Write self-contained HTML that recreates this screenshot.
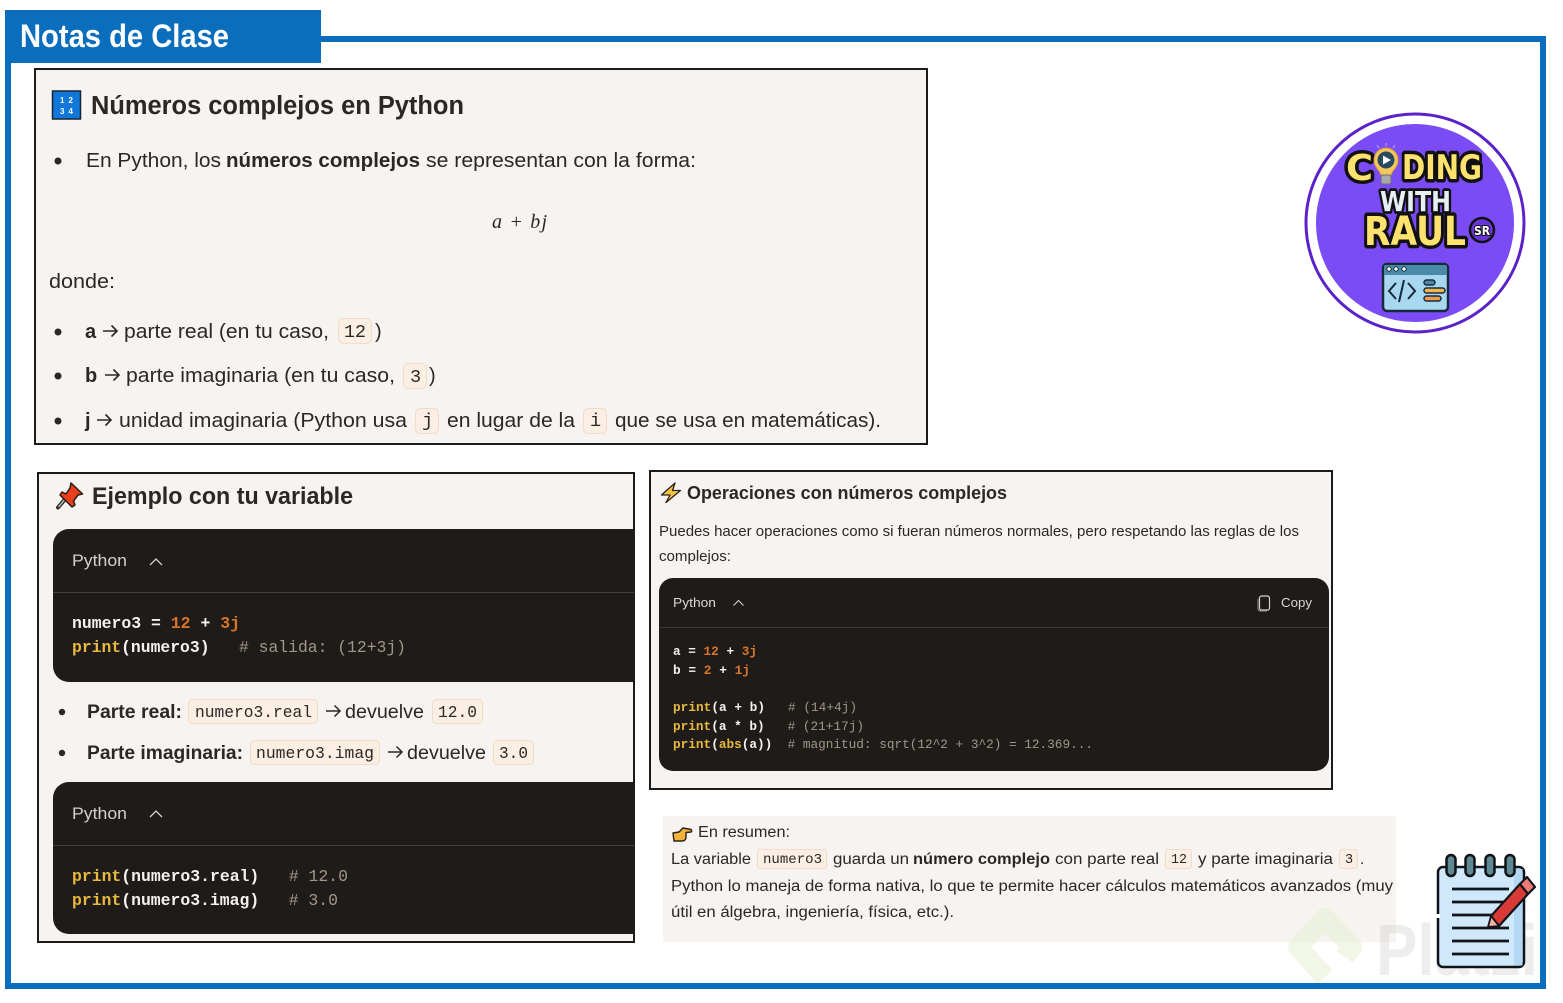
<!DOCTYPE html>
<html lang="es"><head><meta charset="utf-8"><title>Notas de Clase</title>
<style>
html,body{margin:0;padding:0;background:#fff;width:1563px;height:1003px;overflow:hidden}
svg{display:block}
text{font-family:"Liberation Sans",sans-serif;fill:#2b2724;white-space:pre}
.b{font-weight:700}
.m{font-family:"Liberation Mono",monospace}
.c{font-family:"Liberation Mono",monospace;font-weight:700;fill:#f4f1ee}
.o{fill:#d9752b}.y{fill:#e8b93f}.g{fill:#a0978a;font-weight:400}
.chip{fill:#fbefe4;stroke:#efdccb;stroke-width:1}
.lg{font-family:"DejaVu Sans",sans-serif;paint-order:stroke;font-weight:700}
</style></head><body>
<svg width="1563" height="1003" viewBox="0 0 1563 1003" xmlns="http://www.w3.org/2000/svg">
<rect width="1563" height="1003" fill="#fff"/>

<!-- box 1 -->
<rect x="35" y="69" width="892" height="375" fill="#f6f3f0" stroke="#1b1b1b" stroke-width="2"/>
<rect x="52.500" y="91" width="28" height="28" fill="#0f78d8" stroke="#1a2430" stroke-width="1.500"/>
<text x="60" y="103" font-size="8" class="b" style="fill:#fff" textLength="13">1 2</text>
<text x="60" y="114" font-size="8" class="b" style="fill:#fff" textLength="13">3 4</text>
<text x="91" y="114" font-size="25.500" class="b" textLength="373" lengthAdjust="spacingAndGlyphs">Números complejos en Python</text>
<circle cx="58" cy="161" r="3.500" fill="#2b2724"/>
<text x="86" y="167" font-size="20" textLength="135" lengthAdjust="spacingAndGlyphs">En Python, los</text>
<text x="226" y="167" font-size="20" class="b" textLength="194" lengthAdjust="spacingAndGlyphs">números complejos</text>
<text x="426" y="167" font-size="20" textLength="270" lengthAdjust="spacingAndGlyphs">se representan con la forma:</text>
<text x="492" y="228" font-size="20" textLength="55" style="font-family:'Liberation Serif',serif;font-style:italic">a + bj</text>
<text x="49" y="288" font-size="20" textLength="66" lengthAdjust="spacingAndGlyphs">donde:</text>

<circle cx="58" cy="332" r="3.500" fill="#2b2724"/>
<text x="85" y="338" font-size="20" class="b">a</text>
<path d="M103 331H117M111.500 325.500L117 331L111.500 336.500" fill="none" stroke="#2b2724" stroke-width="1.600"/>
<text x="124" y="338" font-size="20" textLength="205" lengthAdjust="spacingAndGlyphs">parte real (en tu caso,</text>
<rect class="chip" x="338.500" y="318.500" width="33" height="25" rx="5"/>
<text x="344" y="337" font-size="18.500" class="m" textLength="22">12</text>
<text x="375" y="338" font-size="20">)</text>

<circle cx="58" cy="376" r="3.500" fill="#2b2724"/>
<text x="85" y="382" font-size="20" class="b">b</text>
<path d="M105 375H119M113.500 369.500L119 375L113.500 380.500" fill="none" stroke="#2b2724" stroke-width="1.600"/>
<text x="126" y="382" font-size="20" textLength="269" lengthAdjust="spacingAndGlyphs">parte imaginaria (en tu caso,</text>
<rect class="chip" x="403.500" y="363.500" width="23" height="25" rx="5"/>
<text x="410" y="382" font-size="18.500" class="m">3</text>
<text x="429" y="382" font-size="20">)</text>

<circle cx="58" cy="421" r="3.500" fill="#2b2724"/>
<text x="85" y="427" font-size="20" class="b">j</text>
<path d="M97 420H111M105.500 414.500L111 420L105.500 425.500" fill="none" stroke="#2b2724" stroke-width="1.600"/>
<text x="119" y="427" font-size="20" textLength="288" lengthAdjust="spacingAndGlyphs">unidad imaginaria (Python usa</text>
<rect class="chip" x="415.500" y="408.500" width="23" height="25" rx="5"/>
<text x="422" y="426" font-size="18.500" class="m">j</text>
<text x="447" y="427" font-size="20" textLength="128" lengthAdjust="spacingAndGlyphs">en lugar de la</text>
<rect class="chip" x="583.500" y="408.500" width="23" height="25" rx="5"/>
<text x="590" y="426" font-size="18.500" class="m">i</text>
<text x="615" y="427" font-size="20" textLength="266" lengthAdjust="spacingAndGlyphs">que se usa en matemáticas).</text>

<!-- box 2 -->
<rect x="38" y="473" width="596" height="469" fill="#f6f3f0" stroke="#1b1b1b" stroke-width="2"/>
<path d="M58 507.500L67 497" stroke="#2a2a2a" stroke-width="4" stroke-linecap="round" fill="none"/>
<path d="M58.500 507L66 498" stroke="#c9ccd0" stroke-width="1.300" fill="none"/>
<path d="M71 483L82.500 494L78 495L73.500 501L75 505L72 507L60 495L62 492L66 494L70 488Z" fill="#e8401c" stroke="#2a1a14" stroke-width="1.500" stroke-linejoin="round"/>
<text x="92" y="504" font-size="24" class="b" textLength="261" lengthAdjust="spacingAndGlyphs">Ejemplo con tu variable</text>

<path d="M634 529H69A16 16 0 0 0 53 545V666A16 16 0 0 0 69 682H634Z" fill="#1e1b18"/>
<text x="72" y="566" font-size="16.500" style="fill:#d4d0cb" textLength="55" lengthAdjust="spacingAndGlyphs">Python</text>
<path d="M150 565L156 559L162 565" fill="none" stroke="#d4d0cb" stroke-width="1.300"/>
<rect x="53" y="592" width="581" height="1" fill="#45413d"/>
<text x="72" y="628" font-size="16.500" class="c" textLength="168" xml:space="preserve" lengthAdjust="spacingAndGlyphs">numero3 = <tspan class="o">12</tspan> + <tspan class="o">3j</tspan></text>
<text x="72" y="652" font-size="16.500" class="c" textLength="334" xml:space="preserve" lengthAdjust="spacingAndGlyphs"><tspan class="y">print</tspan>(numero3)   <tspan class="g"># salida: (12+3j)</tspan></text>

<circle cx="62" cy="712" r="3.200" fill="#2b2724"/>
<text x="87" y="718" font-size="19" class="b" textLength="95" lengthAdjust="spacingAndGlyphs">Parte real:</text>
<rect class="chip" x="188.500" y="699.500" width="129" height="24" rx="4"/>
<text x="195" y="717" font-size="16.500" class="m" textLength="117" lengthAdjust="spacingAndGlyphs">numero3.real</text>
<path d="M326 711H340M334.500 705.500L340 711L334.500 716.500" fill="none" stroke="#2b2724" stroke-width="1.500"/>
<text x="345" y="718" font-size="19" textLength="79" lengthAdjust="spacingAndGlyphs">devuelve</text>
<rect class="chip" x="432.500" y="699.500" width="50" height="24" rx="4"/>
<text x="438" y="717" font-size="16.500" class="m" textLength="39" lengthAdjust="spacingAndGlyphs">12.0</text>

<circle cx="62" cy="753" r="3.200" fill="#2b2724"/>
<text x="87" y="759" font-size="19" class="b" textLength="156" lengthAdjust="spacingAndGlyphs">Parte imaginaria:</text>
<rect class="chip" x="250.500" y="740.500" width="129" height="24" rx="4"/>
<text x="256" y="758" font-size="16.500" class="m" textLength="118" lengthAdjust="spacingAndGlyphs">numero3.imag</text>
<path d="M388 752H402M396.500 746.500L402 752L396.500 757.500" fill="none" stroke="#2b2724" stroke-width="1.500"/>
<text x="407" y="759" font-size="19" textLength="79" lengthAdjust="spacingAndGlyphs">devuelve</text>
<rect class="chip" x="493.500" y="740.500" width="40" height="24" rx="4"/>
<text x="499" y="758" font-size="16.500" class="m" textLength="29" lengthAdjust="spacingAndGlyphs">3.0</text>

<path d="M634 782H69A16 16 0 0 0 53 798V918A16 16 0 0 0 69 934H634Z" fill="#1e1b18"/>
<text x="72" y="819" font-size="16.500" style="fill:#d4d0cb" textLength="55" lengthAdjust="spacingAndGlyphs">Python</text>
<path d="M150 817L156 811L162 817" fill="none" stroke="#d4d0cb" stroke-width="1.300"/>
<rect x="53" y="845" width="581" height="1" fill="#45413d"/>
<text x="72" y="881" font-size="16.500" class="c" textLength="276" xml:space="preserve" lengthAdjust="spacingAndGlyphs"><tspan class="y">print</tspan>(numero3.real)   <tspan class="g"># 12.0</tspan></text>
<text x="72" y="905" font-size="16.500" class="c" textLength="266" xml:space="preserve" lengthAdjust="spacingAndGlyphs"><tspan class="y">print</tspan>(numero3.imag)   <tspan class="g"># 3.0</tspan></text>

<!-- box 3 -->
<rect x="650" y="471" width="682" height="318" fill="#f6f3f0" stroke="#1b1b1b" stroke-width="2"/>
<path d="M675 483L661.500 495H670L666 502.500L680.500 490.500H672.500L675 483Z" fill="#f6c445" stroke="#2a2118" stroke-width="1.300" stroke-linejoin="round"/>
<text x="687" y="499" font-size="18.500" class="b" textLength="320" lengthAdjust="spacingAndGlyphs">Operaciones con números complejos</text>
<text x="659" y="536" font-size="15" textLength="640" lengthAdjust="spacingAndGlyphs">Puedes hacer operaciones como si fueran números normales, pero respetando las reglas de los</text>
<text x="659" y="561" font-size="15" textLength="72" lengthAdjust="spacingAndGlyphs">complejos:</text>
<rect x="659" y="578" width="670" height="193" rx="14" fill="#1e1b18"/>
<text x="673" y="607" font-size="13" style="fill:#dcd8d3" textLength="43" lengthAdjust="spacingAndGlyphs">Python</text>
<path d="M733.500 605.500L738.500 600.500L743.500 605.500" fill="none" stroke="#d4d0cb" stroke-width="1.100"/>
<rect x="1259.500" y="596" width="10" height="14" rx="2" fill="none" stroke="#d4d0cb" stroke-width="1.200"/>
<path d="M1258 599V608.500Q1258 611 1260.500 611H1267" fill="none" stroke="#8d8a85" stroke-width="1"/>
<text x="1281" y="607" font-size="13" style="fill:#dcd8d3" textLength="31" lengthAdjust="spacingAndGlyphs">Copy</text>
<rect x="659" y="627" width="670" height="1" fill="#3a3632"/>
<g font-size="12.700">
<text x="673" y="655" class="c" textLength="84" xml:space="preserve" lengthAdjust="spacingAndGlyphs">a = <tspan class="o">12</tspan> + <tspan class="o">3j</tspan></text>
<text x="673" y="674" class="c" textLength="77" xml:space="preserve" lengthAdjust="spacingAndGlyphs">b = <tspan class="o">2</tspan> + <tspan class="o">1j</tspan></text>
<text x="673" y="711" class="c" textLength="184" xml:space="preserve" lengthAdjust="spacingAndGlyphs"><tspan class="y">print</tspan>(a + b)  <tspan class="g"> # (14+4j)</tspan></text>
<text x="673" y="730" class="c" textLength="191" xml:space="preserve" lengthAdjust="spacingAndGlyphs"><tspan class="y">print</tspan>(a * b)  <tspan class="g"> # (21+17j)</tspan></text>
<text x="673" y="748" class="c" textLength="420" xml:space="preserve" lengthAdjust="spacingAndGlyphs"><tspan class="y">print</tspan>(<tspan class="y">abs</tspan>(a))  <tspan class="g"># magnitud: sqrt(12^2 + 3^2) = 12.369...</tspan></text>
</g>

<!-- box 4 -->
<rect x="663" y="816" width="733" height="126" fill="#f6f3f0"/>
<path d="M673 833L679 832L683 828L691 829.500Q692.500 831 691 832L686 832.500L686 838Q685 841 682 841L674 841Z" fill="#f2b33d" stroke="#2a2118" stroke-width="1.400" stroke-linejoin="round"/>
<text x="698" y="837" font-size="15.500" textLength="92" lengthAdjust="spacingAndGlyphs">En resumen:</text>
<text x="671" y="864" font-size="15.500" textLength="80" lengthAdjust="spacingAndGlyphs">La variable</text>
<rect class="chip" x="757.500" y="849.500" width="69" height="19" rx="3"/>
<text x="763" y="863" font-size="13.500" class="m" textLength="59" lengthAdjust="spacingAndGlyphs">numero3</text>
<text x="833" y="864" font-size="15.500" textLength="76" lengthAdjust="spacingAndGlyphs">guarda un</text>
<text x="913" y="864" font-size="15.500" class="b" textLength="137" lengthAdjust="spacingAndGlyphs">número complejo</text>
<text x="1055" y="864" font-size="15.500" textLength="104" lengthAdjust="spacingAndGlyphs">con parte real</text>
<rect class="chip" x="1165.500" y="849.500" width="26" height="19" rx="3"/>
<text x="1171" y="863" font-size="13.500" class="m" textLength="16" lengthAdjust="spacingAndGlyphs">12</text>
<text x="1198" y="864" font-size="15.500" textLength="135" lengthAdjust="spacingAndGlyphs">y parte imaginaria</text>
<rect class="chip" x="1339.500" y="849.500" width="18" height="19" rx="3"/>
<text x="1345" y="863" font-size="13.500" class="m">3</text>
<text x="1360" y="864" font-size="15.500">.</text>
<text x="671" y="891" font-size="15.500" textLength="722" lengthAdjust="spacingAndGlyphs">Python lo maneja de forma nativa, lo que te permite hacer cálculos matemáticos avanzados (muy</text>
<text x="671" y="917" font-size="15.500" textLength="283" lengthAdjust="spacingAndGlyphs">útil en álgebra, ingeniería, física, etc.).</text>

<!-- watermark -->
<path d="M1345 957L1352 947L1325 918L1298 947L1325 977" fill="none" stroke="#e6eed2" stroke-opacity=".55" stroke-width="20" stroke-linejoin="round"/>
<text x="1376" y="975" font-size="72" class="b" style="fill:#d8d6d4;fill-opacity:.45" textLength="162" lengthAdjust="spacingAndGlyphs">Platzi</text>

<!-- frame -->
<rect x="8" y="39" width="1535" height="947" fill="none" stroke="#0a6ebd" stroke-width="6"/>
<rect x="5" y="10" width="316" height="53" fill="#0a6ebd"/>
<text x="20" y="47" font-size="32" class="b" style="fill:#fff" textLength="209" lengthAdjust="spacingAndGlyphs">Notas de Clase</text>

<!-- logo -->
<circle cx="1415" cy="223" r="109" fill="#fff" stroke="#5a22c8" stroke-width="3"/>
<circle cx="1415" cy="223" r="99" fill="#7b4cf6"/>
<g stroke="#111" stroke-linejoin="round">
<text class="lg" x="1346" y="180" font-size="36" stroke-width="7" style="fill:#ffe36e" textLength="27" lengthAdjust="spacingAndGlyphs">C</text>
<text class="lg" x="1402" y="179" font-size="34" stroke-width="7" style="fill:#ffe36e" textLength="80" lengthAdjust="spacingAndGlyphs">DING</text>
<text class="lg" x="1380" y="211" font-size="28" stroke-width="5.500" style="fill:#e6eef6" textLength="71" lengthAdjust="spacingAndGlyphs">WITH</text>
<text class="lg" x="1364" y="245" font-size="40" stroke-width="7" style="fill:#ffe36e" textLength="102" lengthAdjust="spacingAndGlyphs">RAUL</text>
</g>
<path d="M1381 175C1380 170 1374 168 1374 160A12 12 0 0 1 1398 160C1398 168 1392 170 1391 175Z" fill="#f3c75a" stroke="#d29a3c" stroke-width="1"/>
<rect x="1381" y="175" width="10" height="9" rx="2" fill="#a7a9ad" stroke="#6d6f73" stroke-width="1"/>
<circle cx="1386" cy="160" r="8.500" fill="#2a4a5e"/>
<path d="M1383 155.500L1391 160L1383 164.500Z" fill="#fff"/>
<path d="M1377 145L1379 148M1386 143V146M1395 145L1393 148" stroke="#c9a7ff" stroke-width="1"/>
<circle cx="1482" cy="230" r="12" fill="#6a35d8" stroke="#111" stroke-width="2.500"/>
<text class="lg" x="1474" y="235" font-size="12" stroke="#111" stroke-width="2" style="fill:#fff" textLength="16" lengthAdjust="spacingAndGlyphs">SR</text>
<rect x="1383" y="264" width="65" height="47" rx="4" fill="#a8d8f0" stroke="#152a3a" stroke-width="2.500"/>
<path d="M1384 275V267Q1384 265 1386 265H1445Q1447 265 1447 267V275Z" fill="#4b89a8"/>
<circle cx="1389" cy="269" r="2.200" fill="#fff" stroke="#152a3a"/><circle cx="1396" cy="269" r="2.200" fill="#fff" stroke="#152a3a"/><circle cx="1404" cy="269" r="2.200" fill="#fff" stroke="#152a3a"/>
<path d="M1396 283L1389 291L1396 299M1404 280L1399 302M1408 283L1415 291L1408 299" fill="none" stroke="#152a3a" stroke-width="2"/>
<rect x="1424" y="280" width="11" height="5" rx="2.500" fill="#4b89a8" stroke="#152a3a" stroke-width="1.500"/>
<rect x="1424" y="288" width="21" height="5" rx="2.500" fill="#f0b450" stroke="#152a3a" stroke-width="1.500"/>
<rect x="1424" y="296" width="17" height="5" rx="2.500" fill="#f09a50" stroke="#152a3a" stroke-width="1.500"/>

<!-- notebook -->
<rect x="1438" y="867" width="86" height="100" rx="5" fill="#cfe9fb" stroke="#10141a" stroke-width="2.500"/>
<rect x="1514" y="869" width="8.500" height="96.500" fill="#b4d7f3"/>
<rect x="1436" y="914" width="4" height="4" fill="#fff"/>
<g fill="#5f8a93" stroke="#10141a" stroke-width="2.500">
<rect x="1446.500" y="855" width="9" height="21" rx="4.500"/><rect x="1465.500" y="855" width="9" height="21" rx="4.500"/><rect x="1485.500" y="855" width="9" height="21" rx="4.500"/><rect x="1505.500" y="855" width="9" height="21" rx="4.500"/>
</g>
<path d="M1452 889H1509M1452 902H1509M1452 915H1498M1452 928H1509M1452 941H1509M1452 954H1509" stroke="#10141a" stroke-width="2.800"/>
<path d="M1491 916L1520 884L1528 894L1499 926Z" fill="#d83a36" stroke="#10141a" stroke-width="2.200" stroke-linejoin="round"/>
<path d="M1520 884L1527 877L1535 887L1528 894Z" fill="#ee7b76" stroke="#10141a" stroke-width="2.200" stroke-linejoin="round"/>
<path d="M1488 927L1491 916L1499 926Z" fill="#f4b0a0" stroke="#10141a" stroke-width="1.800" stroke-linejoin="round"/>
</svg>
</body></html>
